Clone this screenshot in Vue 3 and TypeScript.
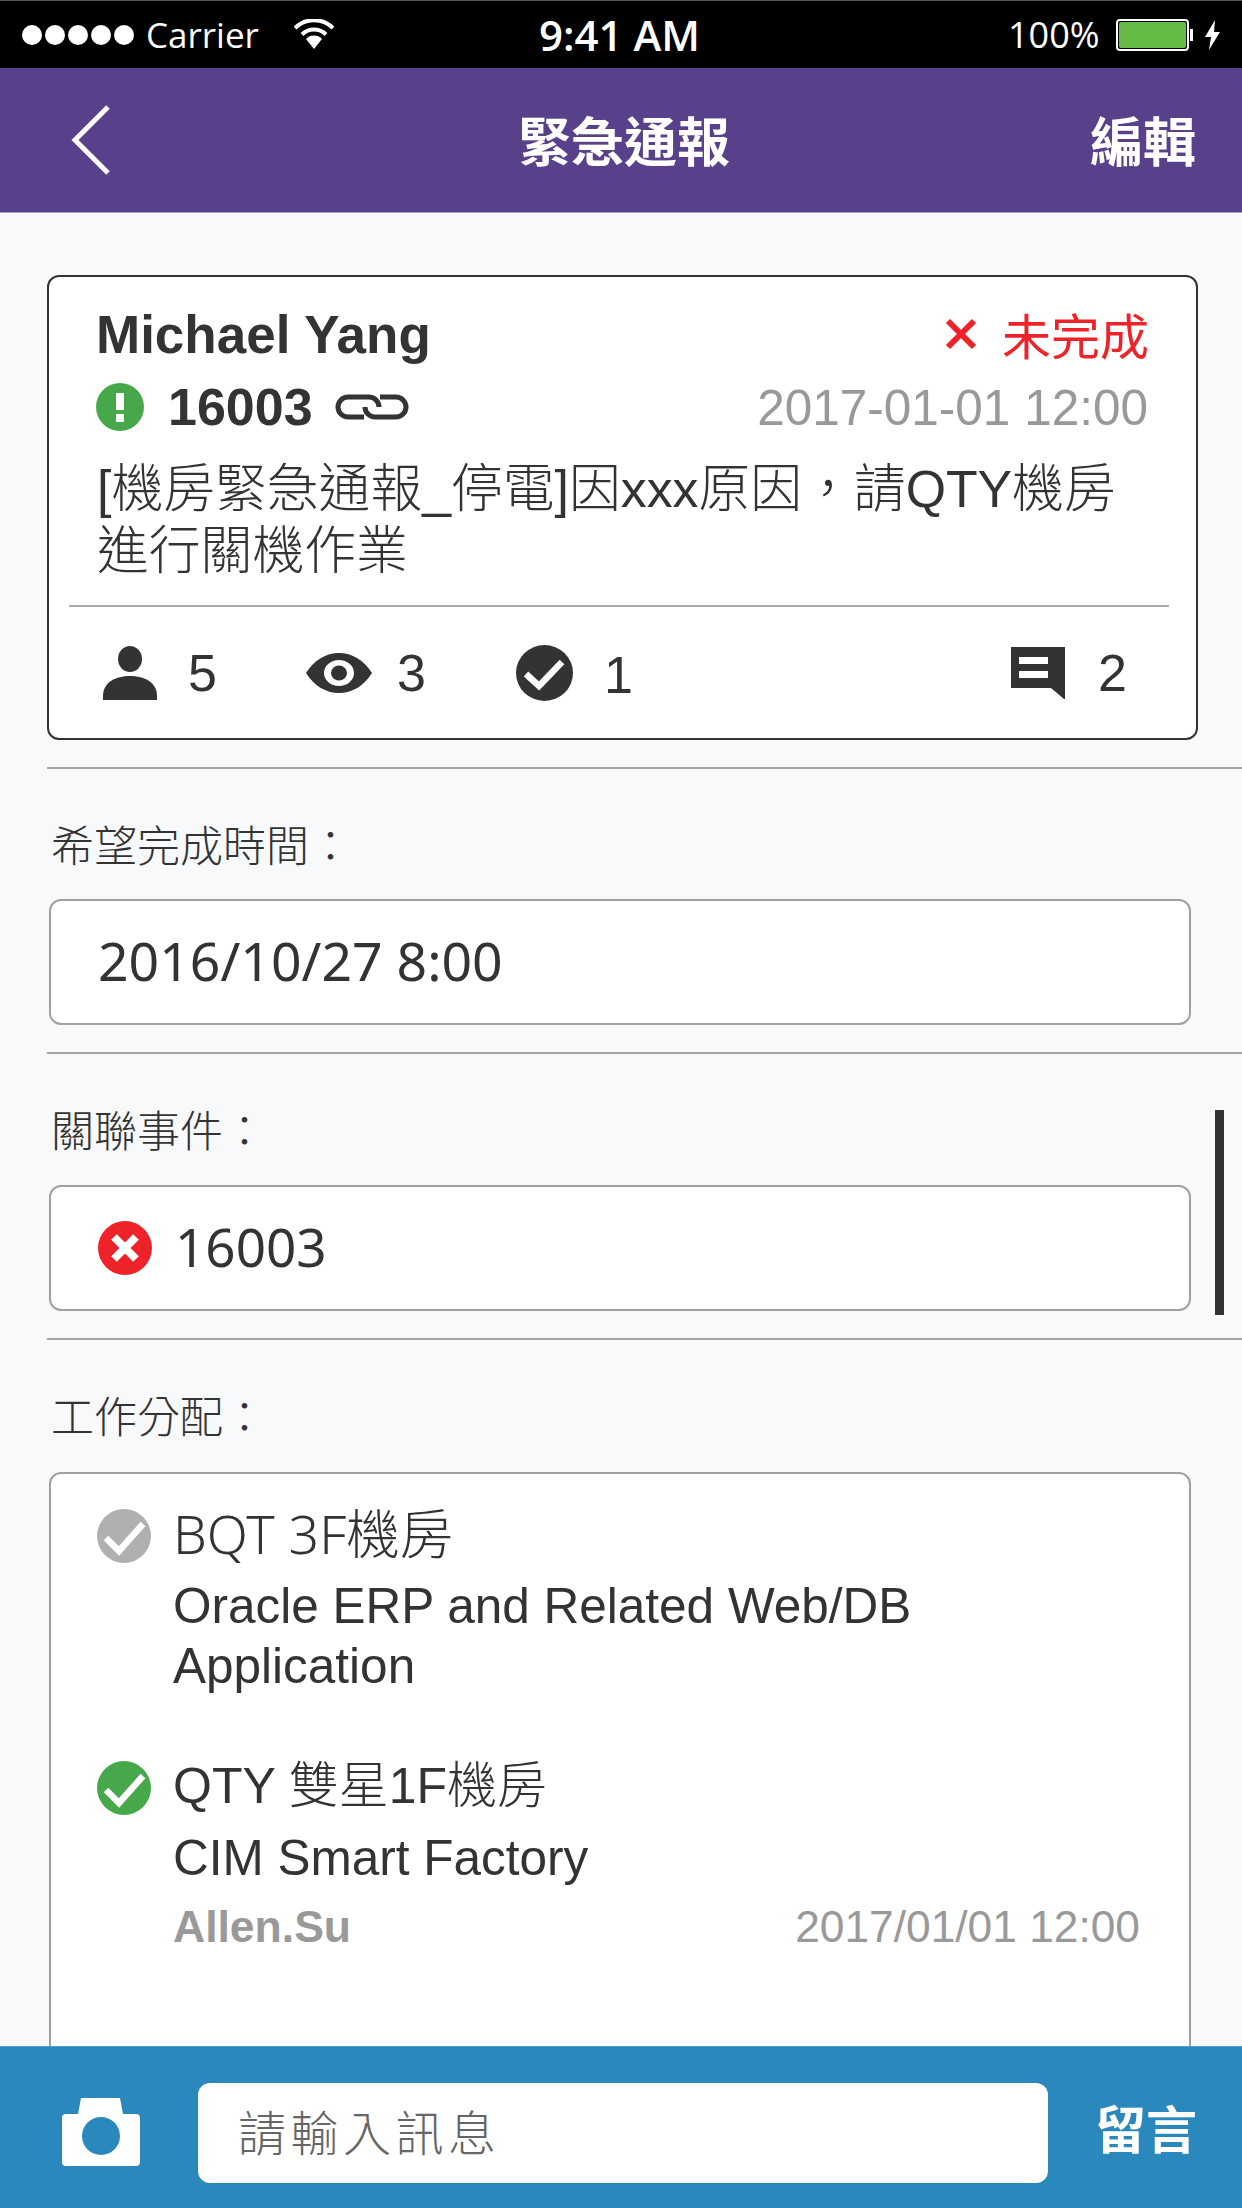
<script setup lang="ts">
const dots: number[] = [1, 2, 3, 4, 5]
</script>

<template>
  <div class="screen">
    <div class="status">
      <div class="dots"><i v-for="d in dots" :key="d" class="dot"></i></div>
      <span class="carrier">Carrier</span>
      <svg class="wifi" viewBox="0 0 40 30" width="40" height="30">
        <path d="M1 9 A27 27 0 0 1 39 9" fill="none" stroke="#fff" stroke-width="4" />
        <path d="M8 15.5 A17 17 0 0 1 32 15.5" fill="none" stroke="#fff" stroke-width="4" />
        <path d="M20 30 L12 20 A11 11 0 0 1 28 20 Z" fill="#fff" />
      </svg>
      <span class="time">9:41 AM</span>
      <span class="pct">100%</span>
      <div class="battery"><div class="battery-fill"></div></div>
      <i class="battery-tip"></i>
      <svg class="bolt" viewBox="0 0 17 30" width="17" height="30">
        <path d="M11 0 L1 17 H7 L5 30 L16 12 H10 Z" fill="#fff" />
      </svg>
    </div>

    <header class="nav">
      <svg class="back" viewBox="0 0 40 70" width="40" height="70">
        <path d="M37 2 L4 35 L37 68" fill="none" stroke="#fff" stroke-width="5" />
      </svg>
      <h1 class="title">緊急通報</h1>
      <span class="edit">編輯</span>
    </header>

    <main class="content">
      <section class="card">
        <div class="row-name">
          <span class="name">Michael Yang</span>
          <span class="state">
            <svg viewBox="0 0 32 32" width="32" height="32">
              <path d="M3 3 L29 29 M29 3 L3 29" stroke="#ee2229" stroke-width="6" fill="none" />
            </svg>
            未完成
          </span>
        </div>
        <div class="row-id">
          <svg class="ic-green" viewBox="0 0 48 48" width="48" height="48">
            <circle cx="24" cy="24" r="24" fill="#46a84a" />
            <rect x="20" y="10" width="8" height="17" fill="#fff" />
            <rect x="20" y="31" width="8" height="8" fill="#fff" />
          </svg>
          <span class="id">16003</span>
          <svg class="ic-link" viewBox="0 0 78 30" width="78" height="30">
            <path d="M31 25 H15 A10 10 0 0 1 15 5 H36 A10 10 0 0 1 46 15" fill="none" stroke="#333" stroke-width="5" />
            <path d="M47 5 H63 A10 10 0 0 1 63 25 H42 A10 10 0 0 1 32 15" fill="none" stroke="#333" stroke-width="5" />
          </svg>
          <span class="date">2017-01-01 12:00</span>
        </div>
        <p class="body">[機房緊急通報_停電]因xxx原因，請QTY機房<br />進行關機作業</p>
        <div class="card-rule"></div>
        <div class="stats">
          <svg class="s-person" viewBox="0 0 54 54" width="54" height="54">
            <ellipse cx="27" cy="13" rx="12" ry="13" fill="#333" />
            <path d="M0 54 V50 C0 36 13 30 27 30 C41 30 54 36 54 50 V54 Z" fill="#333" />
          </svg>
          <span class="n n-5">5</span>
          <svg class="s-eye" viewBox="0 0 66 40" width="66" height="40">
            <path fill-rule="evenodd" fill="#333" d="M0 20 C8 7 20 0 33 0 C46 0 58 7 66 20 C58 33 46 40 33 40 C20 40 8 33 0 20 Z M33 7 A15 13 0 1 0 33 33 A15 13 0 1 0 33 7 Z" />
            <ellipse cx="33" cy="20" rx="8" ry="7.5" fill="#333" />
          </svg>
          <span class="n n-3">3</span>
          <svg class="s-check" viewBox="0 0 57 56" width="57" height="56">
            <ellipse cx="28.500" cy="28" rx="28.500" ry="28" fill="#333" />
            <path d="M10 29 L23 41 L46 17" fill="none" stroke="#fff" stroke-width="6.500" />
          </svg>
          <span class="n n-1">1</span>
          <svg class="s-msg" viewBox="0 0 54 52" width="54" height="52">
            <path fill-rule="evenodd" fill="#333" d="M0 0 H54 V52 L53 52 L40 41 H0 Z M8 10 V17 H37 V10 Z M8 24 V31 H37 V24 Z" />
          </svg>
          <span class="n n-2">2</span>
        </div>
      </section>

      <section class="block">
        <div class="label">希望完成時間：</div>
        <div class="field">2016/10/27 8:00</div>
      </section>

      <section class="block">
        <div class="label label-mid">關聯事件：</div>
        <div class="field field-tag">
          <svg viewBox="0 0 54 54" width="54" height="54">
            <circle cx="27" cy="27" r="27" fill="#ee2229" />
            <path d="M16 16 L38 38 M38 16 L16 38" stroke="#fff" stroke-width="8" fill="none" />
          </svg>
          <span>16003</span>
        </div>
      </section>

      <section class="block">
        <div class="label label-tall">工作分配：</div>
        <div class="assign">
          <div class="item item-one">
            <svg viewBox="0 0 54 54" width="54" height="54">
              <circle cx="27" cy="27" r="27" fill="#afb1b0" />
              <path d="M9 29 L22 42 L46 15" fill="none" stroke="#fff" stroke-width="6.500" />
            </svg>
            <div class="item-text">
              <div class="item-title noto">BQT 3F機房</div>
              <div class="item-desc">Oracle ERP and Related Web/DB Application</div>
            </div>
          </div>
          <div class="item item-two">
            <svg viewBox="0 0 54 54" width="54" height="54">
              <circle cx="27" cy="27" r="27" fill="#46a84a" />
              <path d="M9 29 L22 42 L46 15" fill="none" stroke="#fff" stroke-width="6.500" />
            </svg>
            <div class="item-text">
              <div class="item-title">QTY 雙星1F機房</div>
              <div class="item-desc">CIM Smart Factory</div>
              <div class="sign">
                <b>Allen.Su</b>
                <span>2017/01/01 12:00</span>
              </div>
            </div>
          </div>
        </div>
      </section>

      <div class="scrollbar"></div>
    </main>

    <footer class="composer">
      <svg class="camera" viewBox="0 0 78 68" width="78" height="68">
        <path fill-rule="evenodd" fill="#fff" d="M19 0 H58 L61 16 H74 Q78 16 78 20 V64 Q78 68 74 68 H4 Q0 68 0 64 V20 Q0 16 4 16 H16 Z M39 19 A19 19 0 1 0 39 57 A19 19 0 1 0 39 19 Z" />
      </svg>
      <div class="msg-input">請輸入訊息</div>
      <span class="send">留言</span>
    </footer>
  </div>
</template>

<style>
html,
body {
  margin: 0;
  padding: 0;
  background: #f8f9fb;
}
</style>

<style scoped>
.screen {
  width: 1242px;
  height: 2208px;
  overflow: hidden;
  display: flex;
  flex-direction: column;
  background: #f8f9fb;
  color: #333;
  font-family: "Liberation Sans", "Noto Sans CJK TC", sans-serif;
}

/* status bar */
.status {
  height: 68px;
  flex: none;
  box-sizing: border-box;
  border-top: 1px solid #555;
  background: #000;
  color: #fff;
  display: flex;
  align-items: center;
  padding-left: 22px;
  font-family: "Open Sans", sans-serif;
  font-size: 35px;
}
.dots {
  display: flex;
  gap: 3px;
}
.dot {
  width: 20px;
  height: 20px;
  border-radius: 50%;
  background: #fff;
}
.carrier {
  margin-left: 12px;
  width: 148px;
}
.wifi {
  flex: none;
  margin-top: -1px;
}
.time {
  margin-left: 205px;
  width: 469px;
  font-size: 42px;
  font-weight: 600;
}
.pct {
  width: 108px;
  font-size: 36px;
}
.battery {
  width: 73px;
  height: 32px;
  box-sizing: border-box;
  border: 2px solid #fff;
  border-radius: 4px;
  background: #000;
  padding: 1px;
}
.battery-fill {
  height: 100%;
  border-radius: 2px;
  background: #64bb46;
}
.battery-tip {
  width: 3px;
  height: 12px;
  background: #fff;
  margin-left: 1px;
}
.bolt {
  margin-left: 11px;
  flex: none;
}

/* navigation */
.nav {
  height: 145px;
  flex: none;
  box-sizing: border-box;
  border-bottom: 1px solid #a79cc9;
  background: #58408a;
  color: #fff;
  display: flex;
  align-items: center;
  padding: 0 46px 3px 71px;
  font-weight: 700;
  font-size: 53px;
}
.back {
  flex: none;
  margin-top: 3px;
}
.title {
  margin: 0 0 0 407px;
  font-size: 53px;
  font-weight: 700;
  flex: 1;
}
.edit {
  flex: none;
}

/* content */
.content {
  flex: 1;
  min-height: 0;
  position: relative;
  padding-top: 62px;
  overflow: hidden;
}
.card {
  box-sizing: border-box;
  margin-left: 47px;
  width: 1151px;
  height: 465px;
  background: #fff;
  border: 2px solid #333;
  border-radius: 12px;
  padding: 30px 48px 0 47px;
}
.row-name {
  display: flex;
  justify-content: space-between;
  align-items: center;
  height: 62px;
  padding-bottom: 7px;
  box-sizing: border-box;
}
.name {
  font-size: 53px;
  font-weight: 700;
}
.state {
  display: flex;
  align-items: center;
  gap: 25px;
  font-size: 49px;
  color: #ee2229;
  margin: -2px -1px 0 0;
}
.row-id {
  display: flex;
  align-items: center;
  height: 76px;
}
.ic-green {
  flex: none;
}
.id {
  font-size: 52px;
  font-weight: 700;
  margin-left: 24px;
}
.ic-link {
  flex: none;
  margin-left: 20px;
}
.date {
  margin-left: auto;
  font-size: 49.500px;
  color: #999;
}
.body {
  margin: 13px 0 0;
  font-size: 51.800px;
  font-weight: 300;
  line-height: 62px;
  padding-left: 1px;
}
.card-rule {
  margin: 23px -21px 0 -27px;
  border-top: 2px solid #aaa;
}
.stats {
  height: 131px;
  display: flex;
  align-items: center;
  padding-left: 7px;
  font-size: 52px;
}
.stats svg {
  flex: none;
}
.n {
  line-height: 1;
}
.n-5 {
  margin-left: 31px;
  width: 118px;
}
.n-3 {
  margin-left: 25px;
  width: 119px;
}
.n-1 {
  margin-left: 31px;
  width: 407px;
  padding-top: 4px;
}
.n-2 {
  margin-left: 33px;
}

/* form blocks */
.block {
  margin-left: 47px;
  margin-top: 27px;
  border-top: 2px solid #a5a5a5;
}
.label {
  height: 130px;
  box-sizing: border-box;
  padding: 50px 0 0 4px;
  font-size: 43px;
  font-weight: 300;
  line-height: 56px;
}
.label-mid {
  height: 131px;
}
.label-tall {
  height: 132px;
}
.field {
  box-sizing: border-box;
  margin-left: 2px;
  width: 1142px;
  height: 126px;
  background: #fff;
  border: 2px solid #a0a0a0;
  border-radius: 12px;
  display: flex;
  align-items: center;
  padding: 0 0 3px 47px;
  font-family: "Noto Sans", "Noto Sans CJK TC", sans-serif;
  font-size: 53.500px;
}
.field-tag {
  gap: 23px;
  font-size: 53px;
}
.field-tag svg {
  flex: none;
  margin-top: 3px;
}
.assign {
  box-sizing: border-box;
  margin-left: 2px;
  width: 1142px;
  height: 700px;
  background: #fff;
  border: 2px solid #a0a0a0;
  border-radius: 12px;
  padding: 35px 49px 0 46px;
}
.item {
  display: flex;
  gap: 22px;
}
.item svg {
  flex: none;
}
.item-two {
  margin-top: 65px;
}
.item-text {
  flex: 1;
  min-width: 0;
}
.item-title {
  font-size: 50px;
  font-weight: 300;
  line-height: 54px;
  margin-top: -2px;
}
.item-title.noto {
  font-family: "Noto Sans", "Noto Sans CJK TC", sans-serif;
  font-size: 53.500px;
}
.item-desc {
  margin-top: 15px;
  padding-right: 90px;
  font-size: 49.500px;
  line-height: 60px;
}
.sign {
  margin-top: 14px;
  display: flex;
  justify-content: space-between;
  align-items: center;
  color: #999;
  font-size: 44.300px;
  line-height: 50px;
}
.sign b {
  font-size: 44.500px;
}
.scrollbar {
  position: absolute;
  left: 1215px;
  top: 897px;
  width: 9px;
  height: 205px;
  background: #333;
}

/* composer */
.composer {
  height: 162px;
  flex: none;
  box-sizing: border-box;
  border-top: 1px solid #4d9fcc;
  background: #2a88bd;
  display: flex;
  align-items: center;
  padding-left: 62px;
}
.camera {
  flex: none;
  margin-top: 8px;
}
.msg-input {
  box-sizing: border-box;
  margin-left: 58px;
  width: 850px;
  height: 100px;
  margin-top: 10px;
  background: #fff;
  border-radius: 12px;
  display: flex;
  align-items: center;
  padding: 0 0 5px 40px;
  font-size: 48px;
  font-weight: 300;
  letter-spacing: 4.500px;
  color: #666;
}
.send {
  margin-left: 47px;
  padding-bottom: 2px;
  color: #fff;
  font-size: 51px;
  font-weight: 700;
}
</style>
